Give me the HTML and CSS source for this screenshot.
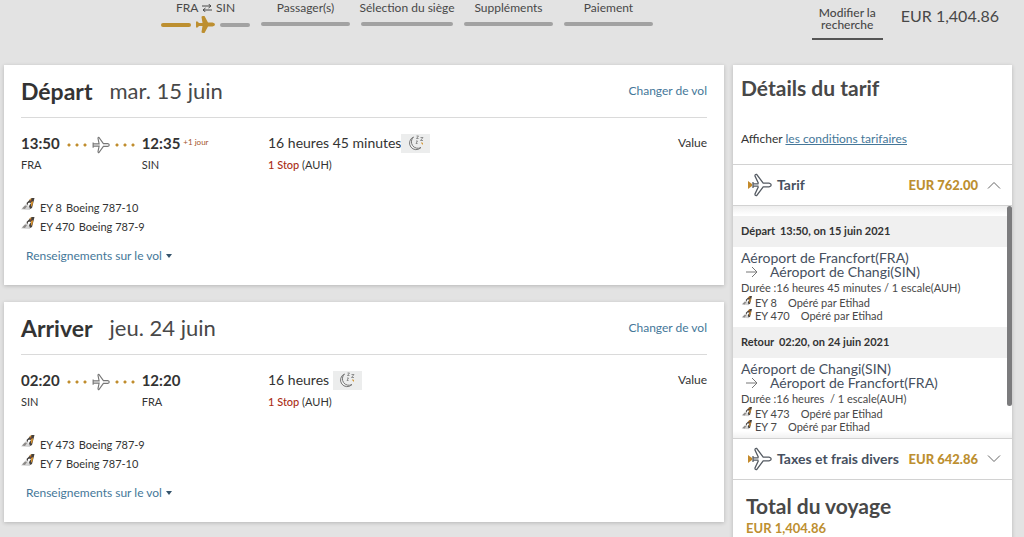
FILE: index.html
```html
<!DOCTYPE html>
<html lang="fr">
<head>
    <meta charset="utf-8">
    <title>Récapitulatif des vols</title>
    <link rel="stylesheet" href="styles.css">
</head>
<body>
    <!-- shared icons -->
    <svg class="sprite" aria-hidden="true">
        <symbol id="plane" viewBox="0 0 19 17">
            <path d="M0 5.500H1.500L3 7H6.500L5.500 1Q5.500 0 7 0H8.500L12 6.500H16.500Q19 7 19 8.500T16.500 10.500H12L8.500 17H7Q5.500 17 5.500 16L6.500 10H3L1.500 11.500H0Z"/>
        </symbol>
        <symbol id="plane-line" viewBox="0 0 24 24">
            <path d="M1.500 8.500v7M1.500 10.500h8L8 3.200Q8 1.400 9.500 2.100L15.200 10.200H21Q23 10.600 23 12T21 13.800H15.200L9.500 21.900Q8 22.600 8 20.800L9.500 13.500h-8"/>
        </symbol>
        <symbol id="tail" viewBox="0 0 14 13">
            <path fill="#d4d4d4" d="M0 11.500 5 6 9 3 9 12Z"/>
            <path fill="#8d8a88" d="M1 10.500 4 7.500 6 8 4 11Z"/>
            <path fill="#45413e" d="M5.500 5 8.500 2 10.500 0H13.500L11 10 9 11 8 8 10 5 8 4.500 6.500 7Z"/>
            <path fill="#d8912c" d="M10 4 12.300 3 11.500 7 10 9ZM8 2 10.500 0 10 2.500Z"/>
            <path fill="#b0552f" d="M9 2.500 10.500 2 10 4Z"/>
            <path fill="#fff" d="M7 5 9.300 5 7.500 9Z"/>
        </symbol>
        <symbol id="moon" viewBox="0 0 18 16">
            <path fill="none" stroke="#777" d="M6.500 2A6.600 6.600 0 1 0 14 12.500 6.500 6.500 0 0 1 6.500 2"/>
            <path fill="none" stroke="#777" stroke-width=".8" d="M9.500 1h2L9.500 3.500h2M13.500 2.500h2.500L13.500 5.500h2.500M9 6h1.500L9 8.500h1.500"/>
            <path fill="none" stroke="#d59a3a" d="M14 8h1.500v1.500"/>
        </symbol>
        <symbol id="fare" viewBox="0 0 24 24">
            <path fill="#c48a2b" d="M0 8 4 11v2L0 16Z"/>
            <path fill="none" stroke="#555b63" stroke-width="1.300" d="M5 10.800h5.500M5 13.200h5.500M5 9v6M10.500 10.600 7 3Q6.800 1 8.800 1.500L15.200 10.200H21Q23.200 10.700 23.200 12T21 13.800H15.200L8.800 22.500Q6.800 23 7 21L10.500 13.400"/>
        </symbol>
        <symbol id="arrow" viewBox="0 0 14 12">
            <path fill="none" stroke="#777" d="M1 6h11M7 1l5 5-5 5"/>
        </symbol>
        <symbol id="chevron" viewBox="0 0 14 8">
            <path fill="none" stroke="#666" d="M1 7.500 7 1.500 13 7.500"/>
        </symbol>
    </svg>

    <header class="topbar">
        <ol class="steps">
            <li class="step current">
                <span>FRA
                    <svg class="swap" viewBox="0 0 10 8"><path d="M0 2h9M6.500 0 9 2 6.500 4M10 6H1M3.500 4 1 6 3.500 8"/></svg>
                SIN</span>
                <div class="progress">
                    <i class="bar done"></i>
                    <svg class="step-plane"><use href="#plane"/></svg>
                    <i class="bar"></i>
                </div>
            </li>
            <li class="step"><span>Passager(s)</span><i class="bar"></i></li>
            <li class="step wide"><span>Sélection du siège</span><i class="bar"></i></li>
            <li class="step"><span>Suppléments</span><i class="bar"></i></li>
            <li class="step"><span>Paiement</span><i class="bar"></i></li>
        </ol>
        <button class="modify" type="button">Modifier la recherche</button>
        <div class="price">EUR 1,404.86</div>
    </header>

    <div class="layout">
        <main class="flights">
            <section class="card">
                <div class="card-head">
                    <h2>Départ</h2>
                    <span class="date">mar. 15 juin</span>
                    <a class="change" href="#">Changer de vol</a>
                </div>
                <div class="trip">
                    <div class="route">
                        <div><strong>13:50</strong><span>FRA</span></div>
                        <div class="path">
                            <i class="dots"></i>
                            <svg class="path-plane"><use href="#plane-line"/></svg>
                            <i class="dots"></i>
                        </div>
                        <div><strong>12:35</strong><span>SIN</span></div>
                        <small>+1 jour</small>
                    </div>
                    <div class="duration">
                        <p>16 heures 45 minutes<span class="night"><svg><use href="#moon"/></svg></span></p>
                        <p class="stops"><b>1 Stop</b> (AUH)</p>
                    </div>
                    <div class="cabin">Value</div>
                </div>
                <ul class="aircraft">
                    <li><svg class="tail"><use href="#tail"/></svg><span>EY 8</span> Boeing 787-10</li>
                    <li><svg class="tail"><use href="#tail"/></svg><span>EY 470</span> Boeing 787-9</li>
                </ul>
                <button class="info" type="button">Renseignements sur le vol</button>
            </section>

            <section class="card">
                <div class="card-head">
                    <h2>Arriver</h2>
                    <span class="date">jeu. 24 juin</span>
                    <a class="change" href="#">Changer de vol</a>
                </div>
                <div class="trip">
                    <div class="route">
                        <div><strong>02:20</strong><span>SIN</span></div>
                        <div class="path">
                            <i class="dots"></i>
                            <svg class="path-plane"><use href="#plane-line"/></svg>
                            <i class="dots"></i>
                        </div>
                        <div><strong>12:20</strong><span>FRA</span></div>
                    </div>
                    <div class="duration">
                        <p>16 heures <span class="night"><svg><use href="#moon"/></svg></span></p>
                        <p class="stops"><b>1 Stop</b> (AUH)</p>
                    </div>
                    <div class="cabin">Value</div>
                </div>
                <ul class="aircraft">
                    <li><svg class="tail"><use href="#tail"/></svg><span>EY 473</span> Boeing 787-9</li>
                    <li><svg class="tail"><use href="#tail"/></svg><span>EY 7</span> Boeing 787-10</li>
                </ul>
                <button class="info" type="button">Renseignements sur le vol</button>
            </section>
        </main>

        <aside class="summary">
            <div class="summary-head">
                <h2>Détails du tarif</h2>
                <p>Afficher <a href="#">les conditions tarifaires</a></p>
            </div>
            <button class="fare" type="button" aria-expanded="true">
                <svg class="fare-icon"><use href="#fare"/></svg>
                <span>Tarif</span>
                <b>EUR 762.00</b>
                <svg class="chevron"><use href="#chevron"/></svg>
            </button>
            <div class="details">
                <h3><span>Départ</span> 13:50, on 15 juin 2021</h3>
                <div class="leg">
                    <div class="airport">Aéroport de Francfort(FRA)</div>
                    <div class="airport to"><svg class="arrow"><use href="#arrow"/></svg>Aéroport de Changi(SIN)</div>
                    <p>Durée :16 heures 45 minutes / 1 escale(AUH)</p>
                    <ul>
                        <li><svg class="tail"><use href="#tail"/></svg><span>EY 8</span>Opéré par Etihad</li>
                        <li><svg class="tail"><use href="#tail"/></svg><span>EY 470</span>Opéré par Etihad</li>
                    </ul>
                </div>
                <h3><span>Retour</span> 02:20, on 24 juin 2021</h3>
                <div class="leg">
                    <div class="airport">Aéroport de Changi(SIN)</div>
                    <div class="airport to"><svg class="arrow"><use href="#arrow"/></svg>Aéroport de Francfort(FRA)</div>
                    <p>Durée :16 heures &nbsp;/ 1 escale(AUH)</p>
                    <ul>
                        <li><svg class="tail"><use href="#tail"/></svg><span>EY 473</span>Opéré par Etihad</li>
                        <li><svg class="tail"><use href="#tail"/></svg><span>EY 7</span>Opéré par Etihad</li>
                    </ul>
                </div>
                <i class="thumb"></i>
            </div>
            <button class="fare" type="button" aria-expanded="false">
                <svg class="fare-icon"><use href="#fare"/></svg>
                <span>Taxes et frais divers</span>
                <b>EUR 642.86</b>
                <svg class="chevron down"><use href="#chevron"/></svg>
            </button>
            <div class="total">
                <h2>Total du voyage</h2>
                <b>EUR 1,404.86</b>
            </div>
        </aside>
    </div>
</body>
</html>
```
FILE: styles.css
```css
*{
    box-sizing: border-box;
}
html{
    overflow: hidden;
}
body{
    margin: 0;
    background: #e3e3e3;
    color: #333;
    font-family: Lato, "Open Sans", sans-serif;
    font-size: 12px;
    line-height: 16px;
}
h2, h3, p, ul, ol{
    margin: 0;
    padding: 0;
}
ul, ol{
    list-style: none;
}
button{
    border: none;
    background: none;
    padding: 0;
    font: inherit;
    color: inherit;
    cursor: pointer;
}
a{
    color: #457799;
}
svg{
    flex: none;
}
.sprite{
    position: absolute;
    width: 0;
    height: 0;
}

/* top bar */
.topbar{
    display: flex;
    align-items: flex-start;
    height: 65px;
    padding: 0 25px 0 161px;
    color: #484848;
}
.steps{
    display: flex;
    gap: 11px;
    margin-right: auto;
}
.step{
    display: flex;
    flex-direction: column;
    align-items: center;
    gap: 6px;
    width: 89px;
    white-space: nowrap;
}
.step.wide{
    width: 92px;
}
.step.current{
    gap: 0;
}
.bar{
    width: 100%;
    height: 4px;
    border-radius: 2px;
    background: #a2a2a2;
}
.bar.done{
    background: #bd8f30;
}
.progress{
    display: flex;
    align-items: center;
    gap: 5px;
    width: 100%;
}
.step-plane{
    width: 19px;
    height: 17px;
    fill: #bd8f30;
}
.swap{
    width: 10px;
    height: 8px;
    margin: 0 1px;
    fill: none;
    stroke: #484848;
}
.modify{
    width: 71px;
    padding: 7px 4px 7px;
    border-bottom: 2px solid #555;
    line-height: 12px;
    font-weight: 500;
}
.price{
    margin-left: 18px;
    padding-top: 4px;
    font-size: 16px;
    line-height: 24px;
}

/* flight cards */
.layout{
    display: grid;
    grid-template-columns: 1fr 279px;
    align-items: start;
    gap: 9px;
    padding: 0 12px 0 4px;
}
.flights{
    display: grid;
    gap: 17px;
}
.card, .summary{
    background: #fff;
    box-shadow: 0 1px 4px rgba(0, 0, 0, .2);
}
.card{
    padding: 0 17px 21px;
}
.card-head{
    display: flex;
    align-items: center;
    height: 53px;
    border-bottom: 1px solid #dadada;
}
.card-head h2{
    font-size: 23px;
    line-height: 28px;
}
.date{
    margin-left: 17px;
    font-size: 22px;
    line-height: 28px;
    color: #484848;
}
.change{
    margin-left: auto;
    text-decoration: none;
}
.trip{
    display: grid;
    grid-template-columns: 247px 1fr auto;
    padding-top: 14px;
}
.route{
    display: flex;
}
.route strong, .route span{
    display: block;
}
.route strong{
    font-size: 15px;
    line-height: 22px;
}
.route span{
    margin-top: 3px;
    font-size: 11px;
}
.path{
    display: flex;
    align-items: center;
    gap: 3px;
    height: 26px;
    margin: 0 5px;
}
.path-plane{
    width: 18px;
    height: 18px;
    fill: none;
    stroke: #777;
    stroke-width: 1.5;
}
.dots{
    width: 24px;
    height: 4px;
    background: radial-gradient(circle, #c08d2d 1px, transparent 2px) 0 0 / 8px 4px;
}
.route small{
    margin-left: 3px;
    font-size: 8px;
    line-height: 20px;
    color: #a3542b;
}
.duration p{
    display: flex;
    align-items: center;
    height: 22px;
    font-size: 14px;
    white-space: pre;
}
.duration .stops{
    height: 16px;
    margin-top: 3px;
    font-size: 11px;
}
.stops b{
    color: #aa2e16;
    font-weight: 500;
}
.night{
    display: grid;
    place-items: center;
    width: 29px;
    height: 19px;
    background: #eceded;
}
.night svg{
    width: 18px;
    height: 16px;
}
.cabin{
    padding-top: 3px;
}
.aircraft{
    margin-top: 25px;
    line-height: 19px;
    font-size: 11px;
}
.aircraft li{
    display: flex;
}
.aircraft span{
    margin: 0 4px 0 5px;
}
.tail{
    width: 14px;
    height: 13px;
}
.info{
    display: flex;
    align-items: center;
    gap: 4px;
    margin: 12px 0 0 5px;
    color: #457799;
}
.info::after{
    content: "";
    border: 3px solid transparent;
    border-top: 4px solid #34536b;
    border-bottom: 0;
}

/* fare summary */
.summary-head{
    padding: 10px 8px 17px;
}
.summary h2{
    font-size: 21px;
    line-height: 26px;
    color: #484848;
}
.summary-head p{
    margin-top: 30px;
}
.fare{
    display: flex;
    align-items: center;
    width: 100%;
    height: 42px;
    padding: 0 11px 0 15px;
    border-top: 1px solid #d2d2d2;
    border-bottom: 1px solid #d2d2d2;
    font-size: 14px;
    font-weight: 700;
    color: #465060;
    white-space: nowrap;
}
.fare b{
    margin-left: auto;
    font-size: 13px;
    color: #bd8f30;
}
.fare-icon{
    width: 24px;
    height: 24px;
    margin-right: 5px;
}
.chevron{
    width: 14px;
    height: 8px;
    margin-left: 9px;
}
.chevron.down{
    transform: rotate(180deg);
}
.details{
    position: relative;
    padding-top: 10px;
    background: linear-gradient(#eee, #fff 9px, #fff 97%, #f1f1f1);
}
.details h3{
    padding: 7px 8px 8px;
    background: #f0f0f0;
    font-size: 11px;
    line-height: 16px;
}
.details h3 span{
    margin-right: 2px;
}
.leg{
    padding: 4px 8px 5px;
    font-size: 11px;
    line-height: 13px;
    color: #484848;
}
.airport{
    font-size: 14px;
    line-height: 14px;
    color: #465060;
}
.to{
    display: flex;
    align-items: center;
    gap: 11px;
    padding-left: 4px;
}
.arrow{
    width: 14px;
    height: 12px;
}
.leg p{
    line-height: 17px;
}
.leg li{
    display: flex;
}
.leg li span{
    margin: 0 11px 0 2px;
}
.leg .tail{
    width: 12px;
    height: 10px;
}
.thumb{
    position: absolute;
    top: 0;
    right: 0;
    width: 5px;
    height: 200px;
    border-radius: 3px;
    background: #7b7b7d;
}
.total{
    padding: 13px 13px 20px;
    font-size: 13px;
    line-height: 18px;
}
.total b{
    color: #bd8f30;
}
```
